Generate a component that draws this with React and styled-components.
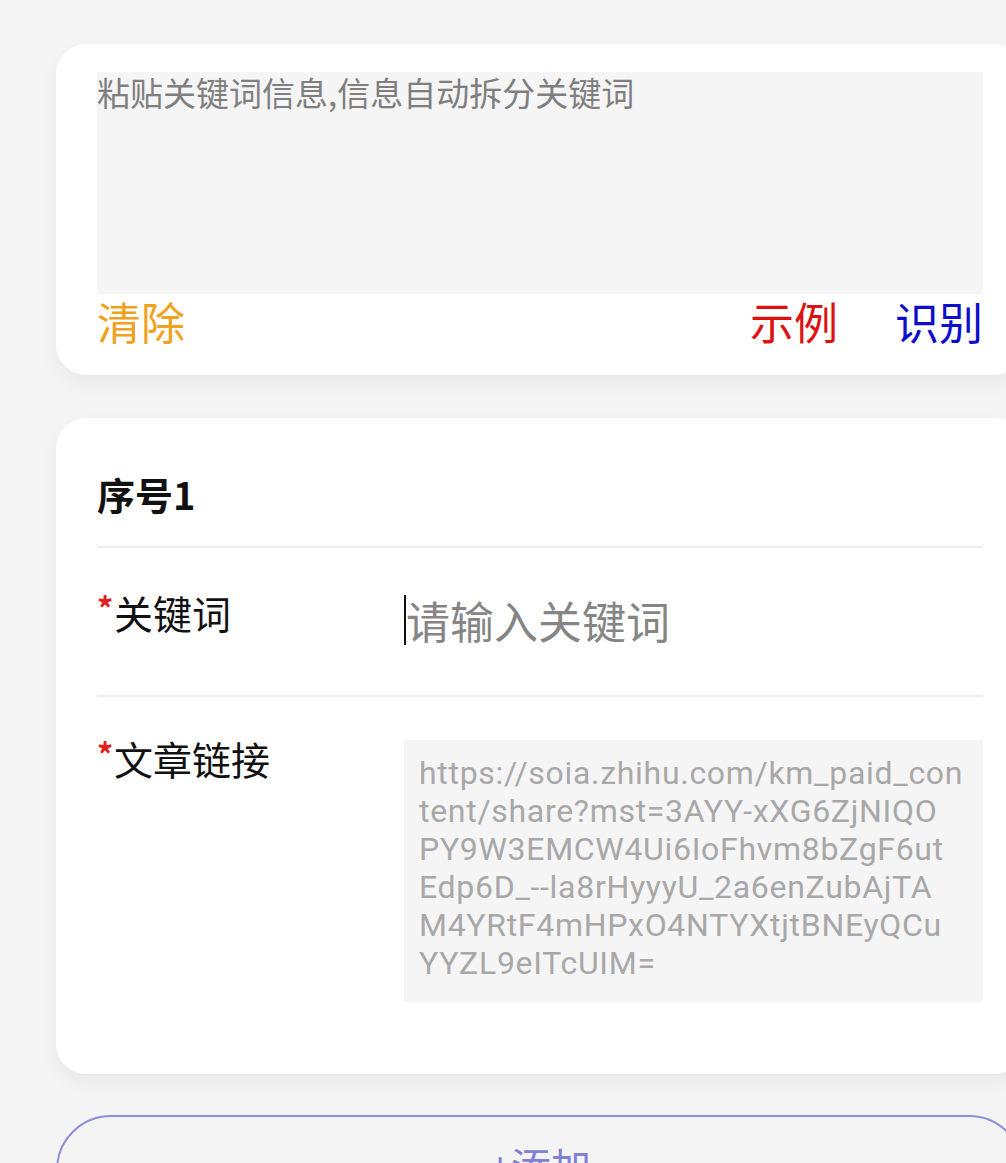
import React from 'react'
import styled, { createGlobalStyle } from 'styled-components'

const GlobalStyle = createGlobalStyle`
  html, body {
    margin: 0;
    padding: 0;
    background: #f4f4f4;
    overflow: hidden;
  }
  body {
    font-family: "Noto Sans CJK SC", "Noto Sans", sans-serif;
  }
`

const Page = styled.div`
  width: 1006px;
  height: 1163px;
  overflow: hidden;
  padding: 44px 0 0 56px;
  box-sizing: border-box;
  display: flex;
  flex-direction: column;
  gap: 43px;
`

const Card = styled.section`
  width: 968px;
  flex-shrink: 0;
  background: #fff;
  border-radius: 30px;
  box-shadow: 0 8px 18px rgba(0, 0, 0, 0.05);
  box-sizing: border-box;
  padding: ${(p) => p.$pad || '0 41px'};
`

const PasteBox = styled.div`
  height: 222px;
  background: #f5f5f5;
  color: #7f7f7f;
  font-size: 33px;
  line-height: 40px;
  box-sizing: border-box;
`

const Actions = styled.div`
  display: flex;
  align-items: center;
  height: 54px;
  gap: 57px;

  .spacer {
    flex: 1;
  }
`

const ActionBtn = styled.span`
  font-size: 44px;
  line-height: 50px;
  color: ${(p) => p.$color};
`

const Title = styled.div`
  height: 130px;
  display: flex;
  align-items: center;
  padding-top: 22px;
  box-sizing: border-box;
  font-size: 38px;
  font-weight: 700;
  color: #111;
  border-bottom: 2px solid #efefef;
`

const Row = styled.div`
  display: flex;
  align-items: flex-start;
  border-bottom: ${(p) => (p.$last ? 'none' : '2px solid #efefef')};
  padding: ${(p) => p.$pad || '0'};
  min-height: ${(p) => p.$h || 'auto'};
  box-sizing: border-box;
`

const Label = styled.div`
  width: 307px;
  flex-shrink: 0;
  font-size: 39px;
  line-height: 44px;
  color: #111;
  margin-top: ${(p) => p.$top || '0'};

  .req {
    display: inline-block;
    width: 17px;
    color: #e02020;
    font-size: 32px;
    font-weight: 700;
    vertical-align: 8px;
  }
`

const InputLine = styled.div`
  position: relative;
  font-size: 44px;
  line-height: 50px;
  color: #858585;
  margin-top: 47px;
  padding-left: 2px;

  &::before {
    content: '';
    position: absolute;
    left: 0;
    top: 0;
    width: 2px;
    height: 50px;
    background: #111;
  }
`

const LinkBox = styled.div`
  flex: 1;
  background: #f5f5f5;
  color: #a8a8a8;
  font-family: Roboto, "Noto Sans", sans-serif;
  font-size: 32px;
  line-height: 38px;
  letter-spacing: 0.7px;
  padding: 14px 6px 18px 15px;
  min-height: 262px;
  box-sizing: border-box;
  white-space: nowrap;
  overflow: hidden;
`

const AddButton = styled.div`
  width: 968px;
  height: 110px;
  flex-shrink: 0;
  margin-top: -2px;
  border: 2px solid #8e8ede;
  border-radius: 56px;
  box-sizing: border-box;
  display: flex;
  justify-content: center;
  padding-top: 28px;
  font-size: 40px;
  line-height: 40px;
  color: #8080d4;
`

const LINK_LINES = [
  'https://soia.zhihu.com/km_paid_con',
  'tent/share?mst=3AYY-xXG6ZjNIQO',
  'PY9W3EMCW4Ui6IoFhvm8bZgF6ut',
  'Edp6D_--la8rHyyyU_2a6enZubAjTA',
  'M4YRtF4mHPxO4NTYXtjtBNEyQCu',
  'YYZL9eITcUIM=',
]

export default function App() {
  return (
    <>
      <GlobalStyle />
      <Page>
        <Card $pad="28px 41px 27px">
          <PasteBox>粘贴关键词信息,信息自动拆分关键词</PasteBox>
          <Actions>
            <ActionBtn $color="#f0a21c">清除</ActionBtn>
            <span className="spacer" />
            <ActionBtn $color="#dd1111">示例</ActionBtn>
            <ActionBtn $color="#0d0dcc">识别</ActionBtn>
          </Actions>
        </Card>

        <Card $pad="0 41px 72px">
          <Title>序号1</Title>
          <Row $h="149px">
            <Label $top="37px">
              <span className="req">*</span>关键词
            </Label>
            <InputLine>请输入关键词</InputLine>
          </Row>
          <Row $last $pad="43px 0 0">
            <Label $top="-9px">
              <span className="req">*</span>文章链接
            </Label>
            <LinkBox>
              {LINK_LINES.map((line) => (
                <div key={line}>{line}</div>
              ))}
            </LinkBox>
          </Row>
        </Card>

        <AddButton>+添加</AddButton>
      </Page>
    </>
  )
}
